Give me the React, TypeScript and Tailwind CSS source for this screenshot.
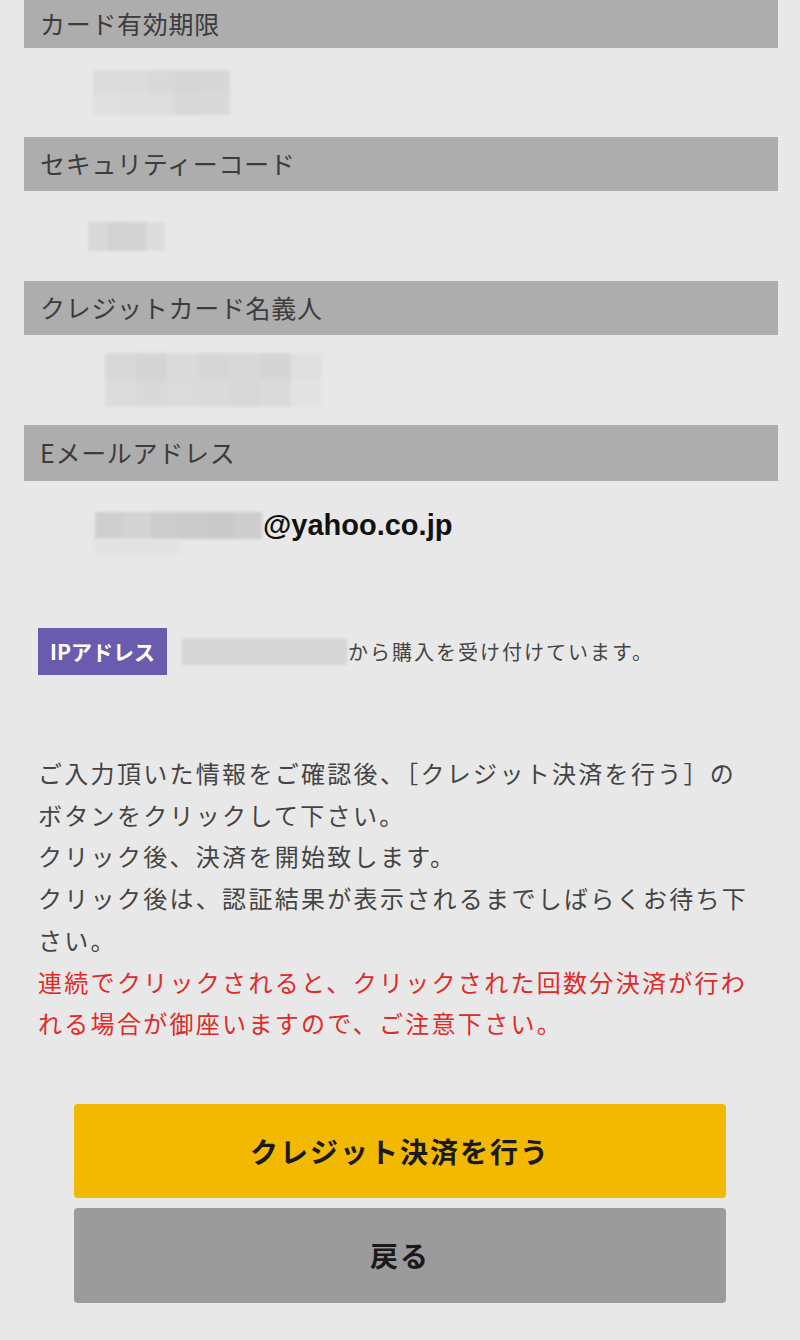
import React from "react";

const jp = { fontFamily: '"Noto Sans CJK JP", "Noto Sans", sans-serif' };

function Header({ label, h }: { label: string; h: string }) {
  return (
    <div className={`ml-[24px] w-[754px] ${h} bg-[#adadad] flex items-center pl-[16px] text-[25px] text-[#3c3c3c] tracking-[0.7px]`}>
      {label}
    </div>
  );
}

function Mosaic({ cells, w, h }: { cells: string[][]; w: number; h: number }) {
  return (
    <div className="flex flex-col blur-[1.5px]" style={{ width: w, height: h }}>
      {cells.map((row, i) => (
        <div key={i} className="flex flex-1">
          {row.map((c, j) => (
            <div key={j} className="flex-1" style={{ background: c }} />
          ))}
        </div>
      ))}
    </div>
  );
}

export default function App() {
  return (
    <div className="w-[800px] h-[1340px] bg-[#e8e8e8] overflow-hidden" style={jp}>
      <Header label="カード有効期限" h="h-[48px]" />
      <div className="h-[89px] flex items-center pl-[93px]">
        <Mosaic
          w={137}
          h={45}
          cells={[
            ["#dcdcdc", "#dcdcdc", "#d9d9d9", "#d6d6d6", "#d7d7d7"],
            ["#dfdfdf", "#dedede", "#dddddd", "#d8d8d8", "#d9d9d9"],
          ]}
        />
      </div>
      <Header label="セキュリティーコード" h="h-[54px]" />
      <div className="h-[90px] flex items-center pl-[88px]">
        <Mosaic
          w={77}
          h={29}
          cells={[["#d8d8d8", "#d2d2d2", "#d3d3d3", "#dcdcdc"]]}
        />
      </div>
      <Header label="クレジットカード名義人" h="h-[54px]" />
      <div className="h-[90px] flex items-center pl-[105px]">
        <Mosaic
          w={217}
          h={54}
          cells={[
            ["#d8d8d8", "#d4d4d4", "#dadada", "#d6d6d6", "#d8d8d8", "#d5d5d5", "#e0e0e0"],
            ["#dcdcdc", "#d9d9d9", "#dbdbdb", "#dadada", "#d8d8d8", "#dadada", "#e2e2e2"],
          ]}
        />
      </div>
      <Header label="Eメールアドレス" h="h-[56px]" />
      <div className="h-[88px] flex items-center pl-[95px]">
        <div className="relative">
          <Mosaic
            w={167}
            h={27}
            cells={[["#cfcfcf", "#d3d3d3", "#cccccc", "#cbcbcb", "#c9c9c9", "#cdcdcd"]]}
          />
          <div className="absolute left-0 top-[28px] w-[85px] h-[14px] bg-[#e1e1e1] blur-[2px]" />
        </div>
        <span
          className="ml-[1px] text-[29px] font-bold text-[#111] leading-none"
          style={{ fontFamily: '"Liberation Sans", Arial, sans-serif' }}
        >
          @yahoo.co.jp
        </span>
      </div>

      <div className="mt-[59px] ml-[38px] flex items-center h-[47px]">
        <div className="w-[129px] h-[47px] bg-[#6a5bae] text-white font-bold text-[21px] flex items-center justify-center">
          IPアドレス
        </div>
        <div className="ml-[15px] w-[165px] h-[27px] bg-[#d7d7d7] blur-[1px]" />
        <span className="ml-[1px] text-[20px] tracking-[2px] text-[#444]">から購入を受け付けています。</span>
      </div>

      <div className="mt-[77px] ml-[38px] w-[722px] text-[24px] leading-[41.7px] tracking-[2.3px] text-[#444]">
        <p>ご入力頂いた情報をご確認後、［クレジット決済を行う］のボタンをクリックして下さい。</p>
        <p>クリック後、決済を開始致します。</p>
        <p>クリック後は、認証結果が表示されるまでしばらくお待ち下さい。</p>
        <p className="text-[#e02a2a]">連続でクリックされると、クリックされた回数分決済が行われる場合が御座いますので、ご注意下さい。</p>
      </div>

      <div className="mt-[60px] ml-[74px] w-[652px] flex flex-col gap-[10px]">
        <button className="h-[94px] rounded-[4px] bg-[#f2b900] text-[28px] font-bold tracking-[2px] text-[#1a1a1a]">
          クレジット決済を行う
        </button>
        <button className="h-[95px] rounded-[4px] bg-[#9b9b9b] text-[28px] font-bold tracking-[2px] text-[#1a1a1a]">
          戻る
        </button>
      </div>
    </div>
  );
}
